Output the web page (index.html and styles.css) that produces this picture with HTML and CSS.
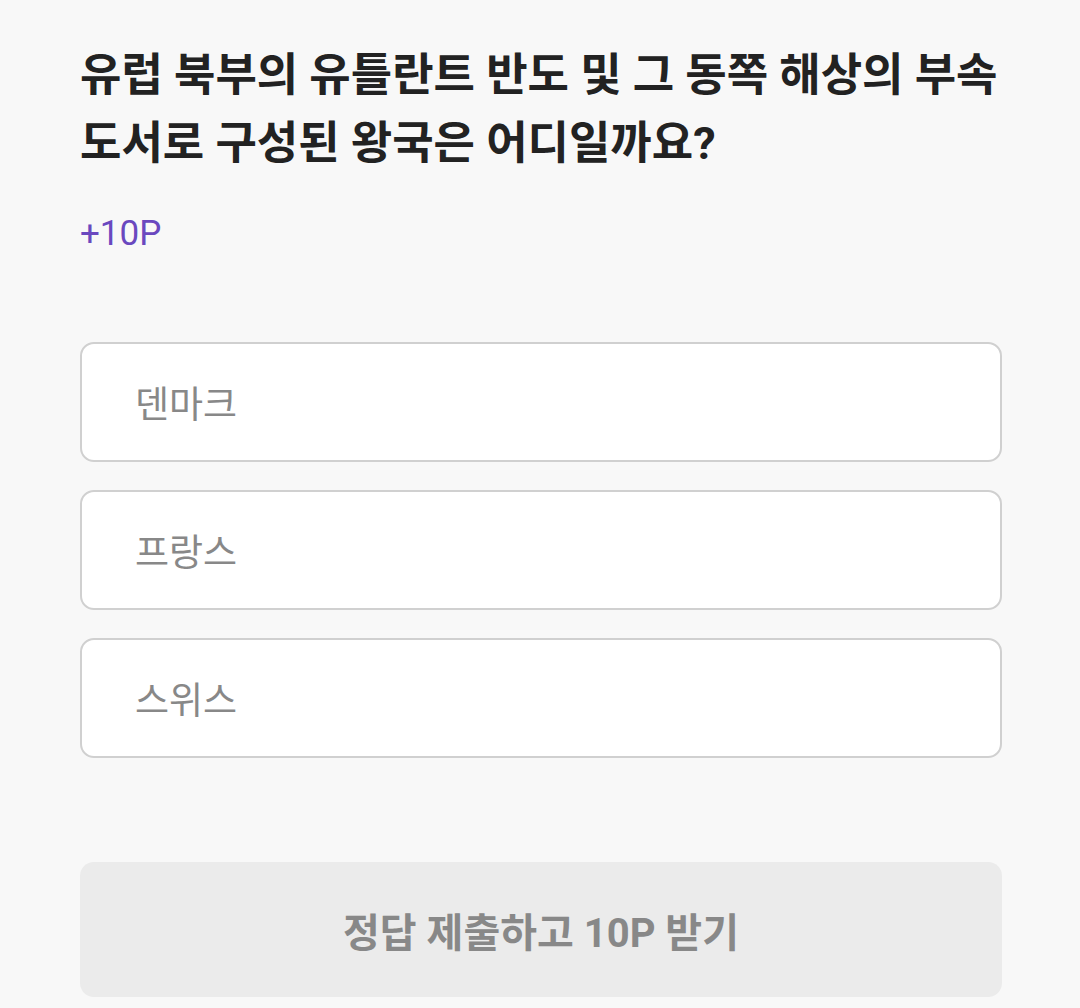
FILE: index.html
```html
<!DOCTYPE html>
<html lang="ko">
<head>
	<meta charset="UTF-8">
	<title>퀴즈</title>
	<link rel="stylesheet" href="styles.css">
</head>
<body>
	<div class="quiz">
		<h1 class="question">유럽 북부의 유틀란트 반도 및 그 동쪽 해상의 부속 도서로 구성된 왕국은 어디일까요?</h1>
		<p class="point">+10P</p>
		<ul class="options">
			<li class="option">덴마크</li>
			<li class="option">프랑스</li>
			<li class="option">스위스</li>
		</ul>
		<button class="submit" disabled>정답 제출하고 10P 받기</button>
	</div>
</body>
</html>
```

FILE: styles.css
```css
*{
	margin: 0;
	padding: 0;
	box-sizing: border-box;
}

body{
	background-color: #f8f8f8;
	font-family: Roboto, "Noto Sans CJK KR", sans-serif;
}

.quiz{
	padding: 42px 78px 0 80px;
}

.question{
	font-size: 45px;
	line-height: 68px;
	font-weight: 700;
	color: #222;
	word-break: keep-all;
}

.point{
	margin-top: 36px;
	font-size: 35px;
	line-height: 40px;
	color: #6a48bf;
}

.options{
	list-style: none;
	margin-top: 88px;
	display: flex;
	flex-direction: column;
	gap: 28px;
}

.option{
	height: 120px;
	display: flex;
	align-items: center;
	padding-left: 53px;
	background-color: #fff;
	border: 2px solid #d0d0d0;
	border-radius: 14px;
	font-size: 37px;
	color: #888;
}

.submit{
	display: block;
	width: 100%;
	height: 135px;
	margin-top: 104px;
	border: 0;
	border-radius: 14px;
	background-color: #ebebeb;
	font-family: Roboto, "Noto Sans CJK KR", sans-serif;
	font-size: 40px;
	font-weight: 700;
	color: #888;
}
```
